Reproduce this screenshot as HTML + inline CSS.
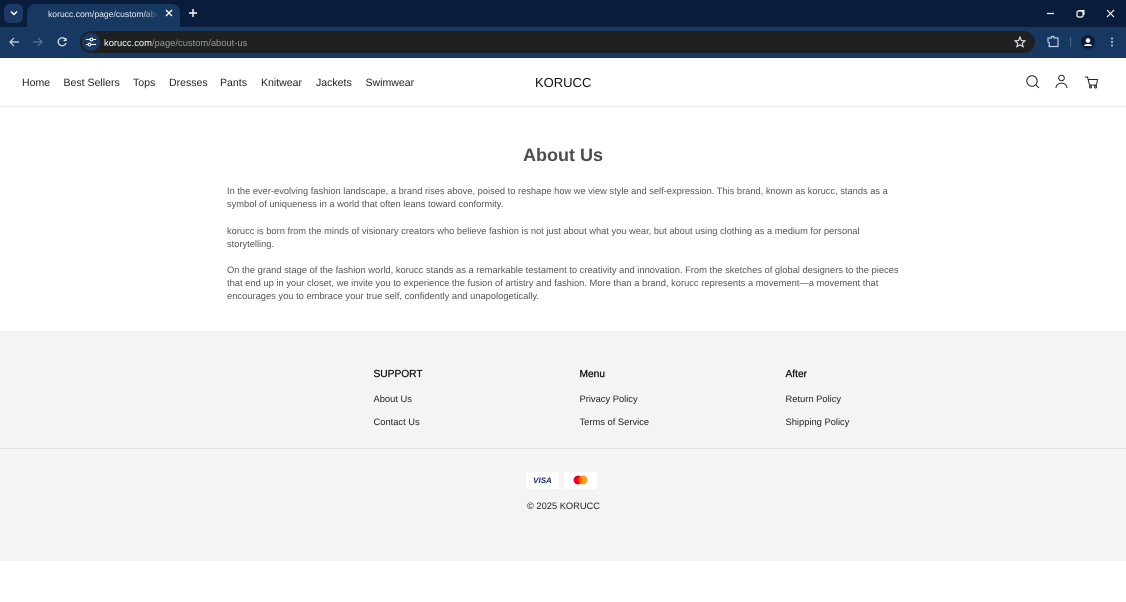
<!DOCTYPE html>
<html><head><meta charset="utf-8"><style>
*{box-sizing:border-box}
html,body{margin:0;padding:0;width:1126px;height:602px;overflow:hidden;background:#fff;font-family:"Liberation Sans",sans-serif;text-rendering:geometricPrecision}
.a{position:absolute;white-space:nowrap}
.nav{top:75.5px;font-size:10.55px;line-height:14px;color:#222}
.p{left:227px;font-size:9.3px;line-height:13px;color:#555}
.h{font-size:10.2px;line-height:14px;color:#111;font-weight:400;-webkit-text-stroke:.25px #111}
.l{font-size:9.35px;line-height:13px;color:#222}
</style></head><body>
<div class="a" style="left:0;top:0;width:1126px;height:27px;background:#0a1c3c"></div>
<div class="a" style="left:0;top:27px;width:1126px;height:31px;background:#173860"></div>
<div class="a" style="left:4px;top:4px;width:19px;height:19px;background:#1b3a64;border-radius:6px"></div>
<svg class="a" style="left:9px;top:10px" width="10" height="7"><path d="M2 1.5L5 4.5 8 1.5" stroke="#fff" stroke-width="1.5" fill="none"/></svg>
<div class="a" style="left:27px;top:4px;width:153px;height:24px;background:#173860;border-radius:8px 8px 0 0"></div>
<div class="a" style="left:48px;top:9px;width:110px;overflow:hidden;font-size:8.6px;line-height:11px;color:#e8edf4;-webkit-mask-image:linear-gradient(90deg,#000 88%,transparent)">korucc.com/page/custom/about-us</div>
<svg class="a" style="left:164px;top:8px" width="11" height="11"><path d="M2 2L8 8M8 2L2 8" stroke="#fff" stroke-width="1.4"/></svg>
<svg class="a" style="left:188px;top:8px" width="11" height="11"><path d="M5 1V9M1 5H9" stroke="#fff" stroke-width="1.4"/></svg>
<svg class="a" style="left:1040px;top:6px" width="80" height="15"><path d="M7 7.5H14" stroke="#fff" stroke-width="1.2"/><rect x="37" y="5" width="6" height="6" rx="1.5" stroke="#fff" fill="none" stroke-width="1.2"/><path d="M39 4.5H44V9" stroke="#fff" fill="none"/><path d="M67 4L74 11M74 4L67 11" stroke="#fff" stroke-width="1.2"/></svg>
<svg class="a" style="left:8px;top:35px" width="62" height="14"><g fill="none" stroke-width="1.2"><path d="M11 7H2M6 3L2 7 6 11" stroke="#cfd9e6"/><path d="M25 7H34M30 3L34 7 30 11" stroke="#58719a"/><path d="M57.5 4.5A4 4 0 1 0 58 8M58 3V5.5H55.5" stroke="#dce4ee"/></g></svg>
<div class="a" style="left:80px;top:31px;width:955px;height:22px;background:#1f2022;border-radius:11px"></div>
<div class="a" style="left:82px;top:33px;width:18px;height:18px;background:#1c3a66;border-radius:9px"></div>
<svg class="a" style="left:85px;top:36px" width="12" height="12"><path d="M1 3.5H5M8 3.5H11M1 8.5H3M6 8.5H11" stroke="#fff" stroke-width="1"/><circle cx="6.5" cy="3.5" r="1.4" fill="none" stroke="#fff"/><circle cx="4.5" cy="8.5" r="1.4" fill="none" stroke="#fff"/></svg>
<div class="a" style="left:104px;top:36.5px;font-size:9.4px;line-height:12px;color:#9a9a9c"><span style="color:#fff">korucc.com</span>/page/custom/about-us</div>
<svg class="a" style="left:1014px;top:36px" width="12" height="12"><path d="M6 1L7.4 4.5 11 4.8 8.2 7.1 9.1 10.7 6 8.8 2.9 10.7 3.8 7.1 1 4.8 4.6 4.5Z" fill="none" stroke="#e6e6e6" stroke-width="1.1"/></svg>
<svg class="a" style="left:1046px;top:35px" width="14" height="14"><path d="M2 3H5.5V1.5H8V3H12V11.5H3L3.5 8 2 7Z" fill="none" stroke="#b9cbe2" stroke-width="1.2"/></svg>
<div class="a" style="left:1070px;top:37px;width:1px;height:10px;background:#4a678c"></div>
<div class="a" style="left:1081px;top:35px;width:14px;height:14px;border-radius:7px;background:#0a1c3c"></div>
<svg class="a" style="left:1081px;top:35px" width="14" height="14"><circle cx="7" cy="5.5" r="2.3" fill="#fff"/><path d="M2.8 11C3.5 8.4 10.5 8.4 11.2 11Z" fill="#fff"/></svg>
<svg class="a" style="left:1109px;top:36px" width="6" height="12"><circle cx="3" cy="2.5" r="1" fill="#c6d4e6"/><circle cx="3" cy="6" r="1" fill="#c6d4e6"/><circle cx="3" cy="9.5" r="1" fill="#c6d4e6"/></svg>

<div class="a" style="left:0;top:58px;width:1126px;height:49px;background:#fff;border-bottom:1px solid #ececec;box-shadow:0 1px 2px rgba(0,0,0,.04)"></div>
<div class="a nav" style="left:22px">Home</div>
<div class="a nav" style="left:63.5px">Best Sellers</div>
<div class="a nav" style="left:133px">Tops</div>
<div class="a nav" style="left:169px">Dresses</div>
<div class="a nav" style="left:220px">Pants</div>
<div class="a nav" style="left:261px">Knitwear</div>
<div class="a nav" style="left:316px">Jackets</div>
<div class="a nav" style="left:365.5px">Swimwear</div>
<div class="a" style="left:535px;top:73.5px;font-size:13px;line-height:18px;color:#111">KORUCC</div>
<svg class="a" style="left:1024px;top:73px" width="76" height="18" fill="none" stroke="#222" stroke-width="1"><circle cx="8" cy="8" r="5.2"/><path d="M12 12L15 15"/><circle cx="37.5" cy="5" r="2.8"/><path d="M32 15C32 8.5 43 8.5 43 15"/><path d="M61 4H63.5L65.5 12H72.5L73.5 6.5H64.5"/><circle cx="66.5" cy="14" r="1"/><circle cx="71.5" cy="14" r="1"/></svg>

<div class="a" style="left:0;top:143px;width:1126px;text-align:center;font-size:18px;line-height:24px;font-weight:700;color:#4d4d4d">About Us</div>
<div class="a p" style="top:184.5px">In the ever-evolving fashion landscape, a brand rises above, poised to reshape how we view style and self-expression. This brand, known as korucc, stands as a<br>symbol of uniqueness in a world that often leans toward conformity.</div>
<div class="a p" style="top:224.5px">korucc is born from the minds of visionary creators who believe fashion is not just about what you wear, but about using clothing as a medium for personal<br>storytelling.</div>
<div class="a p" style="top:264px;font-size:9.36px">On the grand stage of the fashion world, korucc stands as a remarkable testament to creativity and innovation. From the sketches of global designers to the pieces<br>that end up in your closet, we invite you to experience the fusion of artistry and fashion. More than a brand, korucc represents a movement—a movement that<br>encourages you to embrace your true self, confidently and unapologetically.</div>

<div class="a" style="left:0;top:331px;width:1126px;height:230px;background:#f4f4f4"></div>
<div class="a" style="left:0;top:448px;width:1126px;height:1px;background:#e2e2e2"></div>
<div class="a h" style="left:373.5px;top:367.5px">SUPPORT</div>
<div class="a h" style="left:579.5px;top:367.5px">Menu</div>
<div class="a h" style="left:785.5px;top:367.5px">After</div>
<div class="a l" style="left:373.5px;top:392.5px">About Us</div>
<div class="a l" style="left:373.5px;top:415.5px">Contact Us</div>
<div class="a l" style="left:579.5px;top:392.5px">Privacy Policy</div>
<div class="a l" style="left:579.5px;top:415.5px">Terms of Service</div>
<div class="a l" style="left:785.5px;top:392.5px">Return Policy</div>
<div class="a l" style="left:785.5px;top:415.5px">Shipping Policy</div>
<div class="a" style="left:526px;top:472px;width:33px;height:17px;background:#fff"></div>
<div class="a" style="left:526px;top:475.5px;width:33px;text-align:center;font-size:8px;line-height:10px;font-weight:700;font-style:italic;color:#1a2a80">VISA</div>
<div class="a" style="left:564px;top:472px;width:33px;height:17px;background:#fff"></div>
<svg class="a" style="left:573px;top:475px" width="15" height="10"><circle cx="5" cy="5" r="4.5" fill="#eb001b"/><circle cx="10" cy="5" r="4.5" fill="#f79e1b"/><path d="M7.5 1.3A4.5 4.5 0 0 1 7.5 8.7A4.5 4.5 0 0 1 7.5 1.3Z" fill="#ff5f00"/></svg>
<div class="a" style="left:527px;top:499.5px;font-size:9.3px;line-height:13px;color:#222">© 2025 KORUCC</div>
</body></html>
